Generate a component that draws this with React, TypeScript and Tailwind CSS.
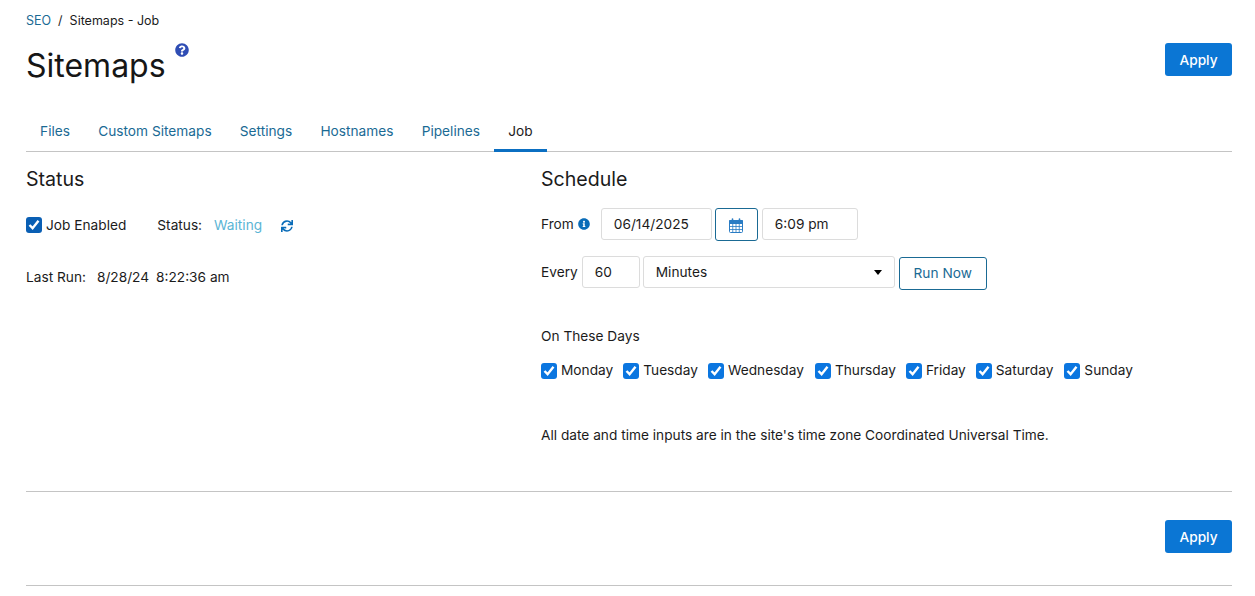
import { FaInfoCircle, FaSync, FaQuestionCircle } from "react-icons/fa"

const tabs = ["Files", "Custom Sitemaps", "Settings", "Hostnames", "Pipelines", "Job"]
const days = [
  { name: "Monday", mr: "mr-[10px]" },
  { name: "Tuesday", mr: "mr-[10px]" },
  { name: "Wednesday", mr: "mr-[11px]" },
  { name: "Thursday", mr: "mr-[10px]" },
  { name: "Friday", mr: "mr-[10px]" },
  { name: "Saturday", mr: "mr-[11px]" },
  { name: "Sunday", mr: "" },
]

function Check({ bg = "bg-[#0b76e0]" }: { bg?: string }) {
  return (
    <span className={`w-4 h-4 rounded-[3px] flex items-center justify-center shrink-0 ${bg}`}>
      <svg viewBox="0 0 16 16" className="w-4 h-4" fill="none" stroke="white" strokeWidth="2.4">
        <path d="M3.5 8 L6.6 11.2 L12.5 3.8" />
      </svg>
    </span>
  )
}

function CalendarIcon() {
  return (
    <svg viewBox="0 0 14 15" className="w-[14px] h-[15px] mt-[3px] text-[#2a7cc4]" fill="none" stroke="currentColor">
      <rect x="0.5" y="2.5" width="13" height="12" rx="1" strokeWidth="1" />
      <path d="M0.5 2.5 H13.5 V5.5 H0.5 Z" fill="currentColor" />
      <path d="M3.5 1 V3 M10.5 1 V3" strokeWidth="1.6" strokeLinecap="round" />
      <path d="M0.5 8.5 H13.5 M0.5 11.5 H13.5 M3.75 5.5 V14.5 M7 5.5 V14.5 M10.25 5.5 V14.5" strokeWidth="0.8" />
    </svg>
  )
}

function ApplyButton() {
  return (
    <button className="w-[67px] h-[33px] pt-px bg-[#0b76d4] text-white text-[13.7px] rounded-[3px] font-medium">
      Apply
    </button>
  )
}

export default function App() {
  return (
    <div className="w-[1255px] h-[596px] overflow-hidden bg-white pl-[26px] pr-[23px] text-[13.7px] text-[#1b1b1b] font-['Inter',sans-serif]">
      {/* Header */}
      <div className="pt-[13px] h-[100px] flex justify-between">
        <div>
          <div className="text-[12.5px] leading-[16px] flex">
            <span className="text-[#1a6a94]">SEO</span>
            <span className="mx-[7px]">/</span>
            <span>Sitemaps - Job</span>
          </div>
          <div className="flex items-start mt-[16px]">
            <h1 className="text-[32px] leading-[42px] text-[#161616]">Sitemaps</h1>
            <FaQuestionCircle className="ml-[9px] -mt-[2px] w-[14px] h-[14px] text-[#2f4db4]" />
          </div>
        </div>
        <div className="pt-[30px]">
          <ApplyButton />
        </div>
      </div>

      {/* Tabs */}
      <div className="flex h-[52px] pt-[10px] border-b border-[#c4c4c4]">
        {tabs.map((t) => (
          <div
            key={t}
            className={
              t === "Job"
                ? "px-[14.1px] pt-[11px] text-[#1b1b1b] border-b-[3px] border-[#0b6fc2] -mb-px"
                : "px-[14.1px] pt-[11px] text-[#1a6a94]"
            }
          >
            {t}
          </div>
        ))}
      </div>

      <div className="flex h-[340px] border-b border-[#c4c4c4]">
        {/* Status */}
        <div className="w-[515px]">
          <h2 className="text-[19.6px] leading-[26px] mt-[14px]">Status</h2>
          <div className="flex items-center mt-[23px] h-[20px]">
            <Check bg="bg-[#0a5fb4]" />
            <span className="ml-[4px]">Job Enabled</span>
            <span className="ml-[31px]">Status:</span>
            <span className="ml-[12px] text-[#5bb5d5]">Waiting</span>
            <FaSync className="ml-[19px] mt-[2px] w-[12px] h-[12px] text-[#0a6cb8]" />
          </div>
          <div className="mt-[32px] flex">
            <span>Last Run:</span>
            <span className="ml-[11px]">8/28/24</span>
            <span className="ml-[7px]">8:22:36 am</span>
          </div>
        </div>

        {/* Schedule */}
        <div className="flex-1">
          <h2 className="text-[19.6px] leading-[26px] mt-[14px]">Schedule</h2>
          <div className="flex items-center mt-[16px] h-[32px]">
            <span>From</span>
            <FaInfoCircle className="ml-[4px] w-[12px] h-[12px] text-[#0a6cb8]" />
            <div className="ml-[11px] w-[111px] h-[32px] border border-[#dcdcdc] rounded-[3px] pl-[12px] flex items-center">
              06/14/2025
            </div>
            <div className="ml-[3px] w-[43px] h-[33px] border border-[#1a6a94] rounded-[3px] flex items-center justify-center">
              <CalendarIcon />
            </div>
            <div className="ml-[4px] w-[96px] h-[32px] border border-[#dcdcdc] rounded-[3px] pl-[12px] flex items-center">
              6:09 pm
            </div>
          </div>
          <div className="flex items-start mt-[16px] h-[32px]">
            <span className="leading-[32px]">Every</span>
            <div className="ml-[4px] w-[58px] h-[32px] border border-[#dcdcdc] rounded-[3px] pl-[12px] flex items-center">
              60
            </div>
            <div className="ml-[3px] w-[252px] h-[32px] border border-[#dcdcdc] rounded-[3px] pl-[12px] pr-[12px] flex items-center justify-between">
              Minutes
              <span className="w-0 h-0 border-x-[4px] border-x-transparent border-t-[5px] border-t-black" />
            </div>
            <button className="ml-[4px] mt-px w-[88px] h-[33px] border border-[#1a6a94] rounded-[3px] text-[#1a6a94]">
              Run Now
            </button>
          </div>
          <div className="mt-[38px]">On These Days</div>
          <div className="flex items-center mt-[14px] h-[20px]">
            {days.map((d) => (
              <label key={d.name} className={`flex items-center ${d.mr}`}>
                <Check />
                <span className="ml-[4px]">{d.name}</span>
              </label>
            ))}
          </div>
          <p className="mt-[44px]">All date and time inputs are in the site's time zone Coordinated Universal Time.</p>
        </div>
      </div>

      {/* Footer */}
      <div className="h-[94px] pt-[28px] flex justify-end border-b border-[#c4c4c4]">
        <ApplyButton />
      </div>
    </div>
  )
}
